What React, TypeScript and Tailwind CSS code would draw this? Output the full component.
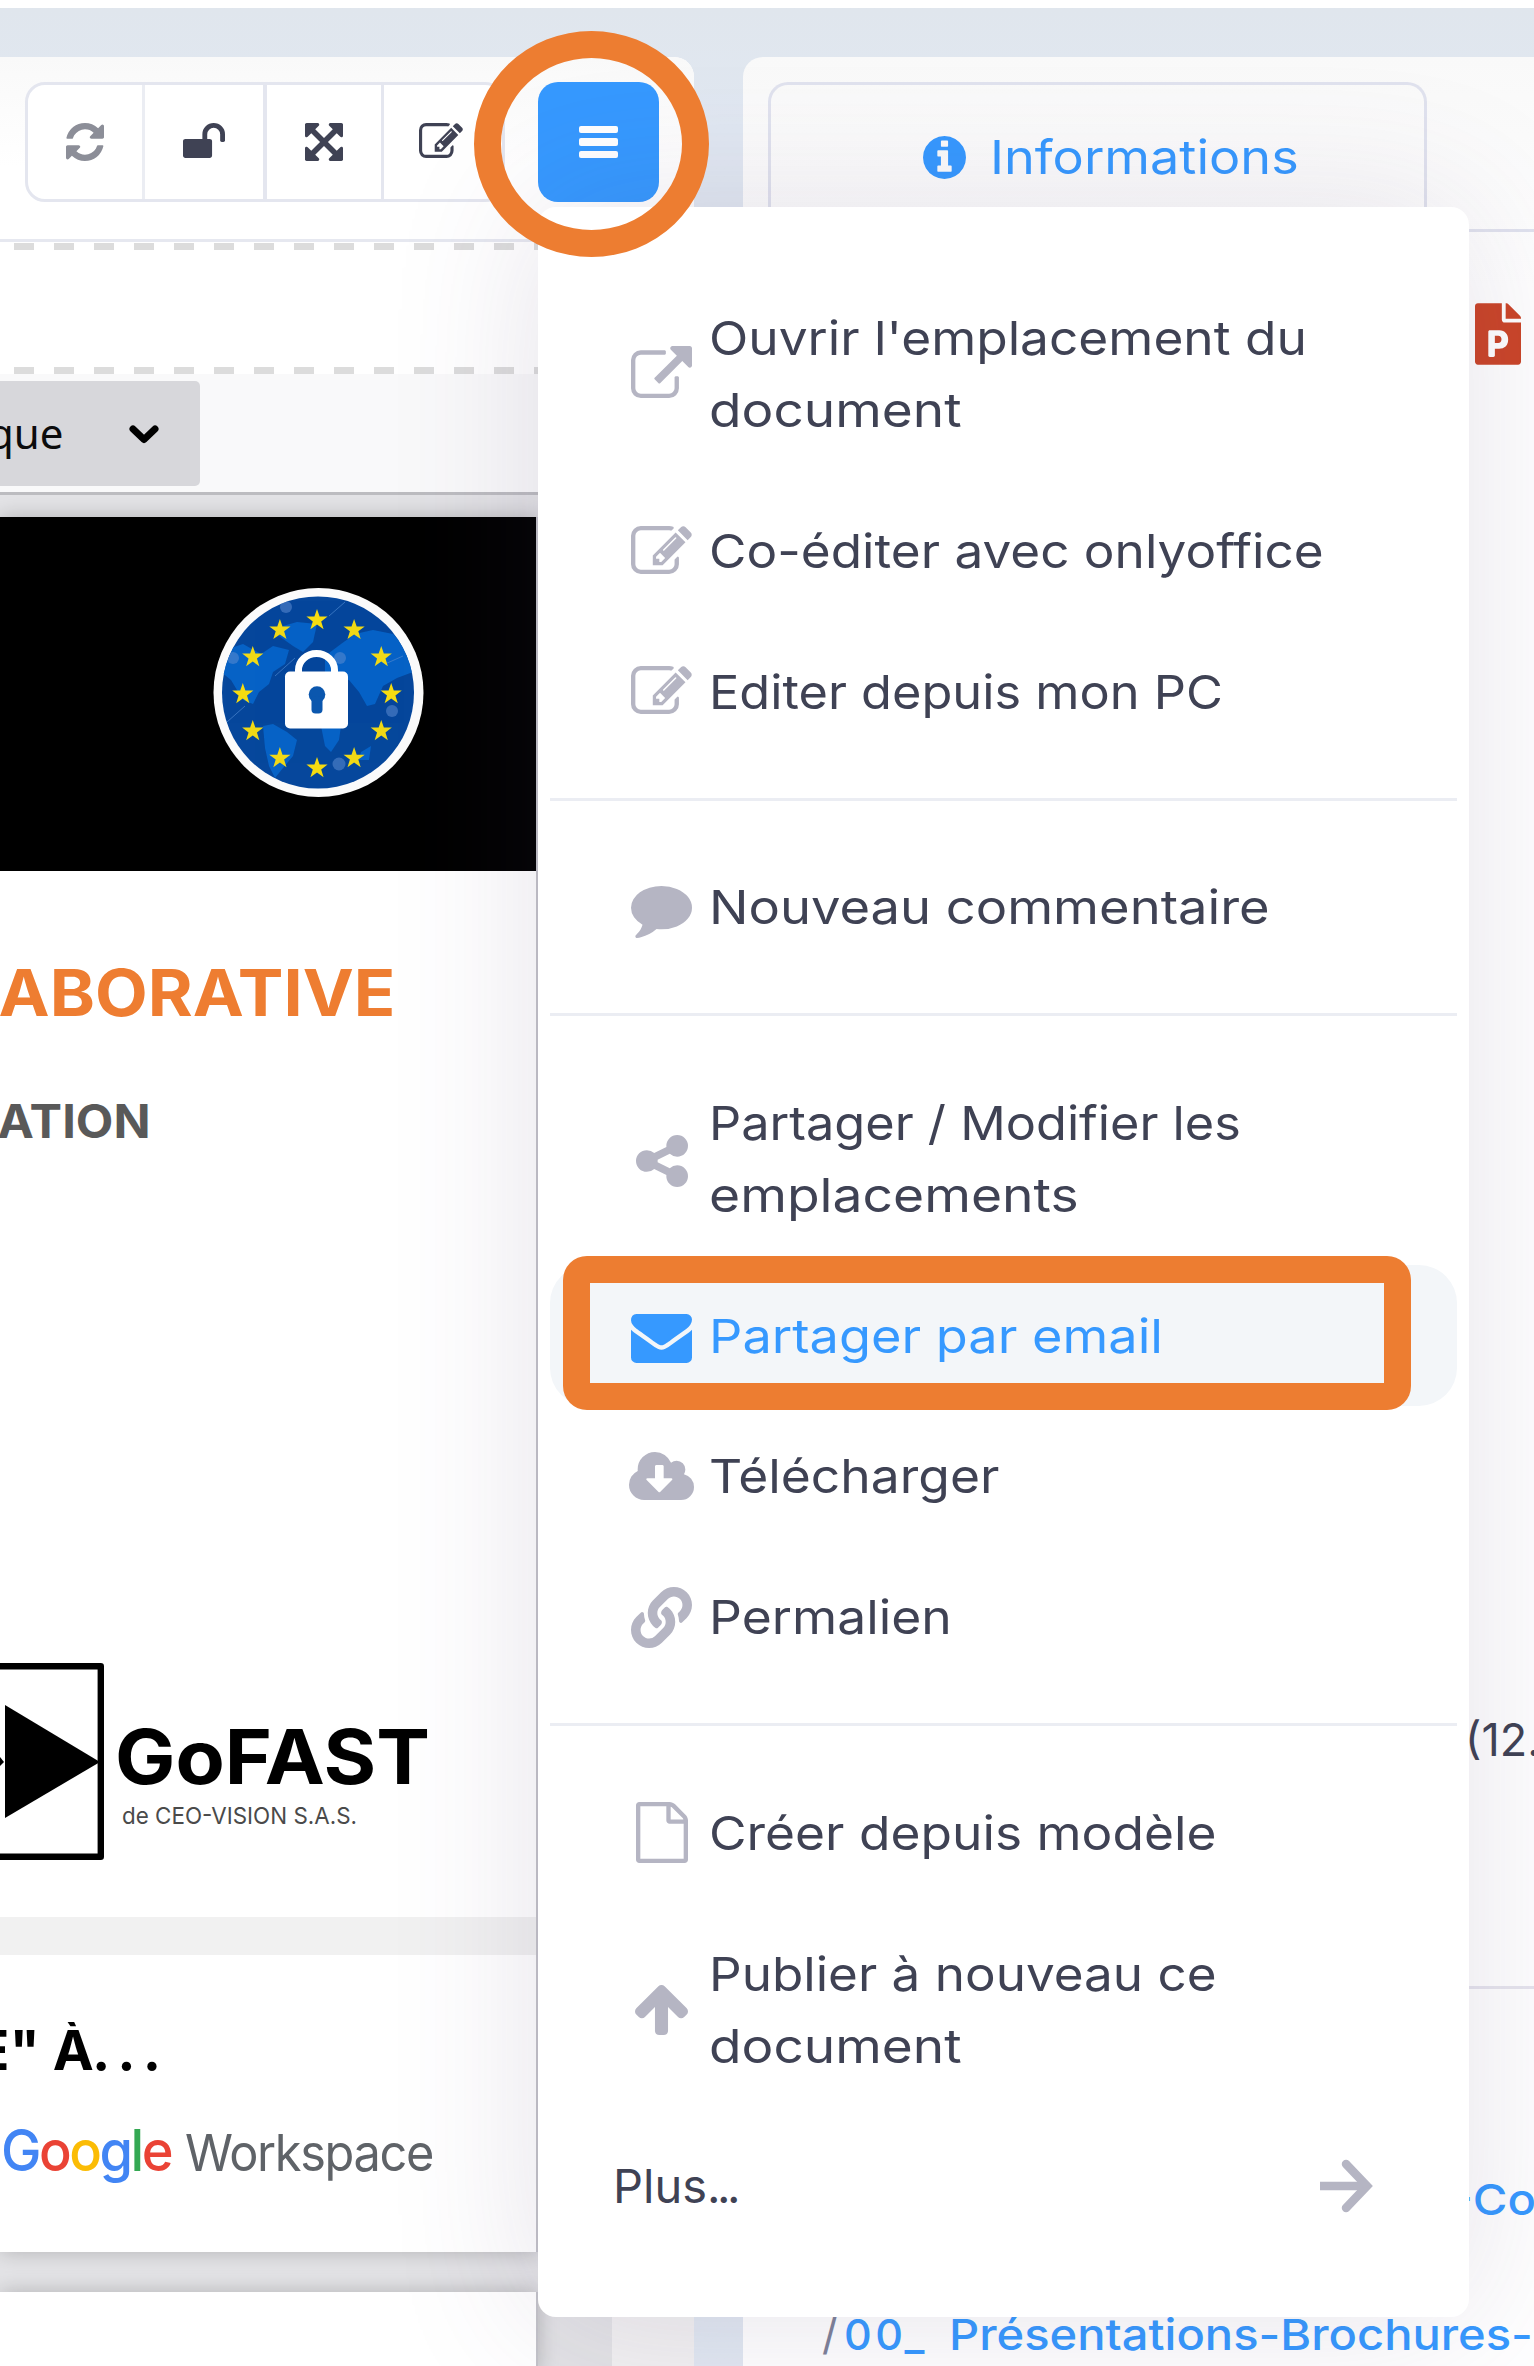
import React from "react";
import { FaFilePowerpoint, FaLink } from "react-icons/fa";

type GlyphProps = { box: string; d: string; className?: string };

function Glyph({ box, d, className }: GlyphProps) {
  return (
    <svg viewBox={box} className={className} fill="currentColor" preserveAspectRatio="none" aria-hidden="true">
      <path d={d} />
    </svg>
  );
}

const P = {
  external:
    "M1408 928v320q0 119-84.5 203.5t-203.5 84.5h-832q-119 0-203.5-84.5t-84.5-203.5v-832q0-119 84.5-203.5t203.5-84.5h704q14 0 23 9t9 23v64q0 14-9 23t-23 9h-704q-66 0-113 47t-47 113v832q0 66 47 113t113 47h832q66 0 113-47t47-113v-320q0-14 9-23t23-9h64q14 0 23 9t9 23zm384-864v512q0 26-19 45t-45 19-45-19l-176-176-652 652q-10 10-23 10t-23-10l-114-114q-10-10-10-23t10-23l652-652-176-176q-19-19-19-45t19-45 45-19h512q26 0 45 19t19 45z",
  edit:
    "M888 1184l116-116-152-152-116 116v56h96v96h56zm440-720q-16-16-33 1l-350 350q-17 17-1 33t33-1l350-350q17-17 1-33zm80 594v190q0 119-84.5 203.5t-203.5 84.5h-832q-119 0-203.5-84.5t-84.5-203.5v-832q0-119 84.5-203.5t203.5-84.5h832q63 0 117 25 15 7 18 23 3 17-9 29l-49 49q-14 14-32 8-23-6-45-6h-832q-66 0-113 47t-47 113v832q0 66 47 113t113 47h832q66 0 113-47t47-113v-126q0-13 9-22l64-64q15-15 35-7t20 29zm-96-738l288 288-672 672h-288v-288zm444 132l-92 92-288-288 92-92q28-28 68-28t68 28l152 152q28 28 28 68t-28 68z",
  comment:
    "M1792 896q0 174-120 321.5t-326 233-450 85.5q-70 0-145-8-198 175-460 242-49 14-114 22-17 2-30.5-9t-17.5-29v-1q-3-4-.5-12t2-10 4.5-9.5l6-9 7-8.5 8-9q7-8 31-34.5t34.5-38 31-39.5 32.5-51 27-59 26-76q-157-89-247.5-220t-90.5-281q0-130 71-248.5t191-204.5 286-136.5 348-50.5q244 0 450 85.5t326 233 120 321.5z",
  share:
    "M1344 1024q133 0 226.5 93.5t93.5 226.5-93.5 226.5-226.5 93.5-226.5-93.5-93.5-226.5q0-12 2-34l-360-180q-92 86-218 86-133 0-226.5-93.5t-93.5-226.5 93.5-226.5 226.5-93.5q126 0 218 86l360-180q-2-22-2-34 0-133 93.5-226.5t226.5-93.5 226.5 93.5 93.5 226.5-93.5 226.5-226.5 93.5q-126 0-218-86l-360 180q2 22 2 34t-2 34l360 180q92-86 218-86z",
  envelope:
    "M1792 710v794q0 66-47 113t-113 47h-1472q-66 0-113-47t-47-113v-794q44 49 101 87 362 246 497 345 57 42 92.5 65.5t94.5 48 110 24.5h2q51 0 110-24.5t94.5-48 92.5-65.5q170-123 498-345 57-39 100-87zm0-294q0 79-49 151t-122 123q-376 261-468 325-10 7-42.5 31t-54 38.5-52 32.5-57.5 27-50 9h-2q-23 0-50-9t-57.5-27-52-32.5-54-38.5-42.5-31q-91-64-262-182.5t-205-142.5q-62-42-117-115.5t-55-136.5q0-78 41.5-130t118.5-52h1472q65 0 112.5 47t47.5 113z",
  cloud:
    "M1280 928q0-14-9-23t-23-9h-224v-352q0-13-9.5-22.5t-22.5-9.5h-192q-13 0-22.5 9.5t-9.5 22.5v352h-224q-13 0-22.5 9.5t-9.5 22.5q0 14 9 23l352 352q9 9 23 9t23-9l351-351q10-12 10-24zm640 224q0 159-112.5 271.5t-271.5 112.5h-1088q-185 0-316.5-131.5t-131.5-316.5q0-130 70-240t188-165q-2-30-2-43 0-212 150-362t362-150q156 0 285.5 87t188.5 231q71-62 166-62 106 0 181 75t75 181q0 76-41 138 130 31 213.5 135.5t83.5 238.5z",
  file:
    "M1596 380q28 28 48 76t20 88v1152q0 40-28 68t-68 28h-1344q-40 0-68-28t-28-68v-1600q0-40 28-68t68-28h896q40 0 88 20t76 48zm-444-244v376h376q-10-29-22-41l-313-313q-12-12-41-22zm384 1528v-1024h-416q-40 0-68-28t-28-68v-416h-768v1536h1280z",
  up:
    "M1675 971q0 51-37 90l-75 75q-38 38-91 38-54 0-90-38l-294-293v704q0 52-37.5 84.5t-90.5 32.5h-128q-53 0-90.5-32.5t-37.5-84.5v-704l-294 293q-36 38-90 38t-90-38l-75-75q-38-38-38-90 0-53 38-91l651-651q35-37 90-37 54 0 91 37l651 651q37 39 37 91z",
  refresh:
    "M1639 1056q0 5-1 7-64 268-268 434.5t-478 166.5q-146 0-282.5-55t-243.5-157l-129 129q-19 19-45 19t-45-19-19-45v-448q0-26 19-45t45-19h448q26 0 45 19t19 45-19 45l-137 137q71 66 161 102t187 36q134 0 250-65t186-179q11-17 53-117 8-23 30-23h192q13 0 22.5 9.5t9.5 22.5zm25-800v448q0 26-19 45t-45 19h-448q-26 0-45-19t-19-45 19-45l138-138q-148-137-349-137-134 0-250 65t-186 179q-11 17-53 117-8 23-30 23h-199q-13 0-22.5-9.5t-9.5-22.5v-7q65-268 270-434.5t480-166.5q146 0 284 55.5t245 156.5l130-129q19-19 45-19t45 19 19 45z",
  unlock:
    "M1728 576v256q0 26-19 45t-45 19h-64q-26 0-45-19t-19-45v-256q0-106-75-181t-181-75-181 75-75 181v192h96q40 0 68 28t28 68v576q0 40-28 68t-68 28h-960q-40 0-68-28t-28-68v-576q0-40 28-68t68-28h672v-192q0-185 131.5-316.5t316.5-131.5 316.5 131.5 131.5 316.5z",
  expand:
    "M1411 541l-355 355 355 355 144-144q29-31 70-14 39 17 39 59v448q0 26-19 45t-45 19h-448q-42 0-59-40-17-39 14-69l144-144-355-355-355 355 144 144q31 30 14 69-17 40-59 40h-448q-26 0-45-19t-19-45v-448q0-42 40-59 39-17 69 14l144 144 355-355-355-355-144 144q-19 19-45 19-12 0-24-5-40-17-40-59v-448q0-26 19-45t45-19h448q42 0 59 40 17 39-14 69l-144 144 355 355 355-355-144-144q-31-30-14-69 17-40 59-40h448q26 0 45 19t19 45v448q0 42-39 59-13 5-25 5-26 0-45-19z",
  info:
    "M1152 1376v-160q0-14-9-23t-23-9h-96v-512q0-14-9-23t-23-9h-320q-14 0-23 9t-9 23v160q0 14 9 23t23 9h96v320h-96q-14 0-23 9t-9 23v160q0 14 9 23t23 9h448q14 0 23-9t9-23zm-128-896v-160q0-14-9-23t-23-9h-192q-14 0-23 9t-9 23v160q0 14 9 23t23 9h192q14 0 23-9t9-23zm640 416q0 209-103 385.5t-279.5 279.5-385.5 103-385.5-103-279.5-279.5-103-385.5 103-385.5 279.5-279.5 385.5-103 385.5 103 279.5 279.5 103 385.5z",
};

type Line = { text: string; stretch: string };

function MenuItem({ icon, lines, active }: { icon: React.ReactNode; lines: Line[]; active?: boolean }) {
  return (
    <div
      className={
        active
          ? "flex items-center rounded-[38px] bg-[#f3f6f9] py-[34.35px] pl-[78px] text-[#3699ff]"
          : "flex items-center py-[34.35px] pl-[78px] text-[#3f4254]"
      }
    >
      <div className={active ? "flex w-[67px] justify-center" : "flex w-[67px] justify-center text-[#b5b5c3]"}>{icon}</div>
      <div className="ml-[14px]">
        {lines.map((l) => (
          <div key={l.text} className={"origin-left whitespace-nowrap text-[47px] leading-[72px] " + l.stretch}>
            {l.text}
          </div>
        ))}
      </div>
    </div>
  );
}

function Divider() {
  return <div className="mt-[35.5px] mb-[36.5px] h-[3px] bg-[#ebedf3]" />;
}

const starPath = "M0 -11 L2.6 -3.4 L10.6 -3.4 L4.2 1.4 L6.6 9.2 L0 4.5 L-6.6 9.2 L-4.2 1.4 L-10.6 -3.4 L-2.6 -3.4 Z";
const stars = Array.from({ length: 12 }, (_, i) => {
  const a = (i * Math.PI) / 6;
  return { x: 104 + 74.2 * Math.sin(a), y: 106 - 74 * Math.cos(a) };
});

function EuBadge() {
  return (
    <svg width="212" height="210" viewBox="0 0 212 210" aria-hidden="true">
      <defs>
        <clipPath id="disc">
          <ellipse cx="105" cy="104.5" rx="96" ry="96" />
        </clipPath>
      </defs>
      <ellipse cx="105.5" cy="104.5" rx="105" ry="104.5" fill="#fbfbfb" />
      <g clipPath="url(#disc)">
        <rect width="212" height="210" fill="#06479c" />
        <g fill="#0763c6">
          <path d="M12 62 L30 56 L48 66 L60 58 L76 62 L72 76 L60 84 L56 96 L46 104 L40 116 L30 112 L18 92 L8 84 Z" />
          <path d="M70 38 L84 34 L104 36 L100 54 L90 64 L80 58 L66 48 Z" />
          <path d="M50 138 L60 136 L74 144 L84 152 L80 168 L70 180 L62 190 L56 178 L52 160 Z" />
          <path d="M112 68 L128 56 L142 46 L160 42 L180 46 L196 62 L200 84 L184 90 L170 98 L162 116 L154 118 L146 104 L136 92 L122 90 L112 84 Z" />
          <path d="M108 138 L128 138 L126 152 L118 164 L112 158 Z" />
          <path d="M148 164 L158 158 L156 172 L146 172 Z" />
        </g>
        <g stroke="#4d86cf" strokeWidth="1" opacity="0.7">
          <path d="M14 134 L32 118" />
          <path d="M116 28 L132 14" />
          <path d="M62 88 L82 70" />
          <path d="M172 76 L190 68" />
        </g>
        <g fill="#5b8bd0" opacity="0.55">
          <circle cx="73" cy="19" r="6" />
          <circle cx="20" cy="70" r="6" />
          <circle cx="127" cy="70" r="6" />
          <circle cx="179" cy="123" r="6" />
          <circle cx="126" cy="176" r="6.5" />
        </g>
      </g>
      {stars.map((s, i) => (
        <path key={i} d={starPath} fill={i % 3 === 0 ? "#f6dc10" : "#f0d916"} transform={`translate(${s.x} ${s.y})`} />
      ))}
      <path d="M85.5 86 V82 A18 16.5 0 0 1 121.5 82 V86" fill="none" stroke="#fff" strokeWidth="7" />
      <rect x="72" y="83.5" width="63" height="57" rx="5" fill="#fff" />
      <circle cx="104" cy="106.5" r="8.3" fill="#0b57ae" />
      <rect x="98.5" y="108" width="11" height="17.5" rx="4" fill="#0b57ae" />
    </svg>
  );
}

function GoFastLogo() {
  return (
    <svg width="440" height="197" viewBox="0 0 440 197" className="font-[Inter]">
      <path d="M-10 3.2 H100.8 V193.8 H-10" fill="none" stroke="#000" strokeWidth="6.4" strokeLinejoin="round" />
      <path d="M5 42 L100 99 L5 155 Z" />
      <path d="M0 94 L4 99 L0 103 Z" />
      <text x="115" y="120.5" fontSize="75" fontWeight="700" textLength="315" lengthAdjust="spacingAndGlyphs">
        GoFAST
      </text>
      <text x="122" y="160.5" fontSize="23.5" fill="#4a4a4a" textLength="235" lengthAdjust="spacingAndGlyphs">
        de CEO-VISION S.A.S.
      </text>
    </svg>
  );
}

function GoogleWorkspaceLogo() {
  return (
    <div className="flex h-[76px] items-start pl-px font-[Inter] whitespace-nowrap">
      <div className="w-[184px] shrink-0">
        <span className="inline-block origin-left scale-x-[0.95] text-[57px] leading-[60px] font-medium tracking-[-2.6px]">
          <span className="text-[#4285f4]">G</span>
          <span className="text-[#ea4335]">o</span>
          <span className="text-[#fbbc05]">o</span>
          <span className="text-[#4285f4]">g</span>
          <span className="text-[#34a853]">l</span>
          <span className="text-[#ea4335]">e</span>
        </span>
      </div>
      <span className="mt-[2px] origin-left scale-x-[0.955] text-[51px] leading-[60px] tracking-[-1.4px] text-[#5f6368]">Workspace</span>
    </div>
  );
}

function Dashes() {
  return <div className="ml-[14px] h-[7px] w-[600px] bg-[repeating-linear-gradient(90deg,#dcdcdc_0_20px,transparent_20px_40px)]" />;
}

function DocumentPanel() {
  return (
    <section className="flex h-[2309px] w-[694px] shrink-0 flex-col overflow-hidden rounded-tr-[20px] bg-white">
      <div className="h-[185px] shrink-0 border-b-[3px] border-[#e6e8f0] bg-linear-to-b from-[#f9f9f9] to-white to-60% pt-[25px] pl-[25px]">
        <div className="flex h-[120px] w-[480px] rounded-[20px] border-[3px] border-[#e4e6ef] bg-white text-[#3f4254]">
          <div className="flex w-[117px] items-center justify-center border-r-[3px] border-[#ebedf3] text-[#8c8e98]">
            <Glyph box="128 128 1536 1536" d={P.refresh} className="h-[38px] w-[38px]" />
          </div>
          <div className="flex w-[122px] items-center justify-center border-r-4 border-[#e4e6ef] pb-1">
            <Glyph box="64 128 1664 1408" d={P.unlock} className="h-[35px] w-[42px]" />
          </div>
          <div className="flex w-[117px] items-center justify-center border-r-[3px] border-[#e4e6ef]">
            <Glyph box="128 128 1536 1536" d={P.expand} className="h-[38px] w-[38px]" />
          </div>
          <div className="flex grow items-center pb-1 pl-[35px]">
            <Glyph box="0 128 1792 1408" d={P.edit} className="h-[35px] w-[44px]" />
          </div>
        </div>
      </div>
      <div className="flex h-[132px] shrink-0 flex-col justify-between pt-px">
        <Dashes />
        <Dashes />
      </div>
      <div className="flex h-[121px] shrink-0 items-center border-b-[3px] border-[#bcbcc0] bg-[#f9f9fa]">
        <div className="flex h-[105px] w-[200px] items-center justify-between rounded-r-[5px] bg-[#d7d7db] pr-[41px] font-['Noto_Sans']">
          <span className="-ml-[12px] text-[42px] leading-[42px] text-[#0c0c0d]">que</span>
          <svg width="30" height="20" viewBox="0 0 30 20" className="mt-[4px]" fill="none" stroke="#000" strokeWidth="7" strokeLinecap="round" strokeLinejoin="round">
            <path d="M4 4 L15 14.5 L26 4" />
          </svg>
        </div>
      </div>
      <div className="flex grow">
        <div className="flex w-[612px] shrink-0 flex-col bg-[#e3e3e6]">
          <div className="h-[22px] shrink-0" />
          <article className="flex h-[1735px] w-[538px] shrink-0 flex-col border-r-2 border-[#c3c3c9] bg-white shadow-[0_0_20px_rgba(0,0,0,0.22)]">
            <div className="h-[354px] shrink-0 bg-black pt-[71px] pl-[213px]">
              <EuBadge />
            </div>
            <div className="mt-[89.5px] flex h-[64px] w-[395px] shrink-0 justify-end font-[Inter] text-[64.6px] leading-[64px] font-bold text-[#ee7d31]">
              <span className="origin-right scale-x-[1.06]">ABORATIVE</span>
            </div>
            <div className="mt-[73.5px] flex h-[46px] w-[151px] shrink-0 justify-end overflow-hidden font-[Inter] text-[46px] leading-[46px] font-bold text-[#595959]">
              <span className="origin-right scale-x-[1.06]">RATION</span>
            </div>
            <div className="mt-[518.5px] h-[197px] shrink-0">
              <GoFastLogo />
            </div>
            <div className="mt-[57px] h-[38px] shrink-0 bg-[#f1f1f1]" />
            <div className="mt-[67.5px] flex h-[56px] w-[168px] shrink-0 justify-end overflow-hidden font-[Inter] text-[55px] leading-[56px] font-bold text-black">
              <span className="-mr-[2px] whitespace-pre">E" À</span>
              <span className="tracking-[7px]">...</span>
            </div>
            <div className="mt-[43px] shrink-0">
              <GoogleWorkspaceLogo />
            </div>
          </article>
          <article className="mt-[40px] h-[80px] w-[538px] shrink-0 border-r-2 border-[#c3c3c9] bg-white shadow-[0_0_20px_rgba(0,0,0,0.22)]" />
        </div>
        <div className="grow bg-[#f2f1f2]" />
      </div>
    </section>
  );
}

function InfoPanel() {
  return (
    <section className="flex h-[2309px] min-w-0 grow flex-col overflow-hidden rounded-tl-[20px] bg-linear-to-b from-[#f9f9f9] to-white to-10% font-[Inter]">
      <div className="h-[175px] shrink-0 border-b-[3px] border-[#e0e2ee] pt-[25px] pl-[25px]">
        <div className="flex h-[147px] w-[659px] items-start rounded-t-[20px] border-[3px] border-b-0 border-[#e0e2ee] pt-[35.6px] pl-[152px] text-[#3699ff]">
          <Glyph box="128 128 1536 1536" d={P.info} className="mt-[15px] h-[43px] w-[43px]" />
          <span className="ml-[24px] origin-left scale-x-[1.11] text-[47px] leading-[72px]">Informations</span>
        </div>
      </div>
      <div className="mt-[71px] ml-[732px] h-[62px] shrink-0 text-[#cb4528]">
        <FaFilePowerpoint className="h-[62px] w-[46px]" />
      </div>
      <div className="mt-[1339px] ml-[722px] h-[72px] shrink-0 text-[45px] leading-[72px] whitespace-nowrap text-[#3f4254]">(12.</div>
      <div className="mt-[210px] h-[3px] shrink-0 bg-[#e6e5ee]" />
      <div className="mt-[178px] ml-[708px] h-[64px] w-[120px] shrink-0 origin-left scale-x-[1.1] text-[43px] leading-[64px] font-medium whitespace-nowrap text-[#3699ff]">
        -Co
      </div>
      <div className="mt-[70.5px] ml-[79px] flex h-[64px] shrink-0 text-[43px] leading-[64px] font-medium whitespace-nowrap text-[#3699ff]">
        <span className="w-[22px] font-normal text-[#7e8299]">/</span>
        <span className="w-[105px] tracking-[3.5px]">00_</span>
        <span className="origin-left scale-x-[1.095]">Présentations-Brochures-</span>
      </div>
    </section>
  );
}

function ActionsMenu() {
  return (
    <nav className="absolute top-[207px] left-[538px] h-[2110px] w-[931px] rounded-[18px] bg-white px-[12px] pt-[61px] font-[Inter] shadow-[0_0_150px_rgba(82,63,105,0.15)]">
      <MenuItem
        icon={<Glyph box="0 0 1792 1536" d={P.external} className="-mt-[5px] h-[52px] w-[61px]" />}
        lines={[
          { text: "Ouvrir l'emplacement du", stretch: "scale-x-[1.094]" },
          { text: "document", stretch: "scale-x-[1.131]" },
        ]}
      />
      <MenuItem
        icon={<Glyph box="0 128 1792 1408" d={P.edit} className="-mt-[3px] h-[48px] w-[61px]" />}
        lines={[{ text: "Co-éditer avec onlyoffice", stretch: "scale-x-[1.091]" }]}
      />
      <MenuItem
        icon={<Glyph box="0 128 1792 1408" d={P.edit} className="-mt-[3px] h-[48px] w-[61px]" />}
        lines={[{ text: "Editer depuis mon PC", stretch: "scale-x-[1.074]" }]}
      />
      <Divider />
      <MenuItem
        icon={<Glyph box="0 256 1792 1536" d={P.comment} className="mt-[9px] h-[52px] w-[61px]" />}
        lines={[{ text: "Nouveau commentaire", stretch: "scale-x-[1.116]" }]}
      />
      <Divider />
      <MenuItem
        icon={<Glyph box="128 128 1536 1536" d={P.share} className="mt-[3px] h-[52px] w-[52px]" />}
        lines={[
          { text: "Partager / Modifier les", stretch: "scale-x-[1.073]" },
          { text: "emplacements", stretch: "scale-x-[1.136]" },
        ]}
      />
      <MenuItem
        active
        icon={<Glyph box="0 256 1792 1408" d={P.envelope} className="mt-[5px] h-[49px] w-[61px]" />}
        lines={[{ text: "Partager par email", stretch: "scale-x-[1.112]" }]}
      />
      <MenuItem
        icon={<Glyph box="0 128 1920 1408" d={P.cloud} className="-mt-px h-[48px] w-[65px]" />}
        lines={[{ text: "Télécharger", stretch: "scale-x-[1.097]" }]}
      />
      <MenuItem
        icon={<FaLink className="h-[61px] w-[61px]" />}
        lines={[{ text: "Permalien", stretch: "scale-x-[1.098]" }]}
      />
      <Divider />
      <MenuItem
        icon={<Glyph box="128 0 1536 1792" d={P.file} className="h-[61px] w-[52px]" />}
        lines={[{ text: "Créer depuis modèle", stretch: "scale-x-[1.095]" }]}
      />
      <MenuItem
        icon={<Glyph box="117 192 1558 1472" d={P.up} className="h-[50px] w-[53px]" />}
        lines={[
          { text: "Publier à nouveau ce", stretch: "scale-x-[1.089]" },
          { text: "document", stretch: "scale-x-[1.131]" },
        ]}
      />
      <div className="flex items-center justify-between py-[34.35px] pr-[84px] pl-[63px]">
        <span className="text-[47px] leading-[72px] text-[#3f4254]">
          Plus<span className="tracking-[-3.5px]">...</span>
        </span>
        <svg width="54" height="54" viewBox="0 0 54 54" fill="none" stroke="#b5b5c3" strokeWidth="8.5" aria-hidden="true">
          <path d="M1 27 H46" strokeLinecap="butt" />
          <path d="M27 5 L48 27 L27 49" strokeLinecap="round" strokeLinejoin="miter" />
        </svg>
      </div>
    </nav>
  );
}

export default function App() {
  return (
    <div className="relative flex h-[2366px] w-[1534px] flex-col overflow-hidden bg-white">
      <div className="mt-2 flex h-[2358px] gap-[49px] bg-linear-to-b from-[#e0e6ed] to-[#e1e8f2] to-5% pt-[49px]">
        <DocumentPanel />
        <InfoPanel />
      </div>
      <button
        type="button"
        className="absolute top-[82px] left-[538px] flex h-[120px] w-[121px] flex-col items-center justify-center gap-[5px] rounded-[20px] bg-[#3699ff]"
      >
        <span className="h-[7.5px] w-[39px] rounded-[2px] bg-white" />
        <span className="h-[7.5px] w-[39px] rounded-[2px] bg-white" />
        <span className="h-[7.5px] w-[39px] rounded-[2px] bg-white" />
      </button>
      <ActionsMenu />
      <div className="absolute top-[31px] left-[474px] h-[226px] w-[235px] rounded-[50%] border-[27px] border-[#ed7d31]" />
      <div className="absolute top-[1256px] left-[563px] h-[154px] w-[848px] rounded-[24px] bg-[#ed7d31] [clip-path:polygon(evenodd,0_0,848px_0,848px_154px,0_154px,0_0,27px_27px,821px_27px,821px_127px,27px_127px,27px_27px)]" />
    </div>
  );
}
